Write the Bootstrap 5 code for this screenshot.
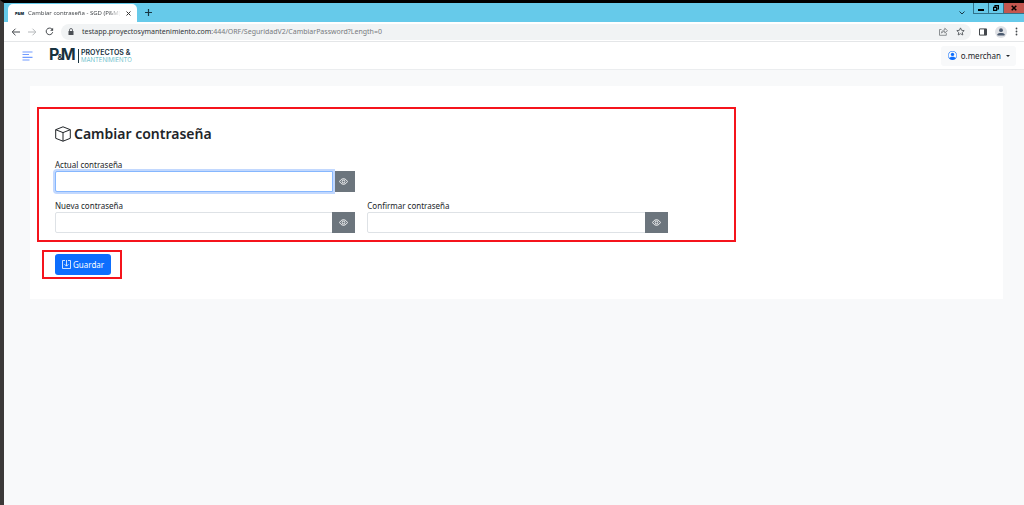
<!DOCTYPE html>
<html lang="es">
<head>
<meta charset="utf-8">
<meta name="viewport" content="width=device-width, initial-scale=1">
<title>Cambiar contraseña - SGD (P&amp;M)</title>
<link href="https://cdn.jsdelivr.net/npm/bootstrap@5.3.0/dist/css/bootstrap.min.css" rel="stylesheet">
<style>
  body { font-family: "Noto Sans", "Open Sans", sans-serif; font-size: 8px; line-height: 12px; background: #f8f9fa; color: #212529; border-top: 3px solid #000; border-left: 4px solid #3b3938; min-height: 100vh; }
  svg { display: block; flex: none; }
  .plain-btn { border: 0; background: none; padding: 0; color: #4b4f54; }
  /* browser frame */
  .tab-strip { background: #66caea; height: 19px; padding-left: 4px; }
  .tab-item { width: 129px; height: 18px; background: #fff; border-radius: 5px 5px 0 0; padding: 0 6px 0 7px; font-size: 6px; color: #45494d; }
  .tab-icon { font: 900 4px "Inter", sans-serif; color: #17323f; width: 9px; }
  .tab-title { white-space: nowrap; -webkit-mask-image: linear-gradient(90deg, #000 86%, transparent); mask-image: linear-gradient(90deg, #000 86%, transparent); }
  .win-btn { height: 11px; width: 15px; border: 1px solid #31728a; border-top: 0; border-right: 0; background: #66caea; padding: 0; }
  .win-close { width: 21px; background: #c4564f; }
  .tool-bar { height: 20px; padding: 0 2px 0 7px; border-bottom: 1px solid #e4e6e8; background: #fff; }
  .url-box { height: 16px; background: #f1f3f4; border-radius: 8px; padding: 0 6px 0 7px; margin-left: 7px; font-size: 7px; color: #777a7e; }
  .url-box b { font-weight: 400; color: #303337; }
  .avatar-btn { width: 12px; height: 12px; background: #dfe1e5; }
  /* application */
  .app-head { height: 28px; background: #fff; border-bottom: 1px solid #ebedef; padding: 0 8px 0 18px; }
  .brand { margin-left: 16px; color: #17323f; text-decoration: none; font-family: "Inter", sans-serif; }
  .brand-mark { font-size: 16px; font-weight: 700; line-height: 14px; width: 29px; }
  .brand-mark span { font-size: 8px; margin: 0 -2px; }
  .brand-name { border-left: 1px solid #17323f; padding-left: 2px; font-size: 7px; line-height: 7px; font-weight: 600; white-space: nowrap; }
  .brand-name span { font-size: 6px; font-weight: 300; color: #47b0bc; }
  .user-btn { height: 20px; background: #f8f9fa; border: 0; border-radius: 3px; padding: 0 6px 0 7px; font-size: 8px; color: #212529; }
  .user-btn::after { margin-left: 5px; }
  .page-card { margin: 16px 21px 0 26px; padding: 21px 8px 20px; background: #fff; }
  .frame-form { border: 2px solid #f5141c; width: 73%; margin-left: -1px; padding: 16px 66px 7px 16px; }
  .frame-save { border: 2px solid #f5141c; width: fit-content; margin: 8px 0 0 4px; padding: 2px 9px 2px 11px; }
  h1 { font-size: 14px; line-height: 18px; font-weight: 600; margin: 0 0 16px; gap: 3px; }
  .form-grid { --bs-gutter-x: 12px; --bs-gutter-y: 8px; }
  .form-label { margin: 0; display: block; }
  .form-control { min-height: 21px; height: 21px; font-size: 8px; line-height: 12px; padding: 3px 6px; border-radius: 2px; border-color: #dee2e6; }
  .form-control:focus { box-shadow: 0 0 0 2px #c2d8fe; border-color: #86b7fe; }
  .eye-btn { width: 23px; height: 21px; padding: 0; border-radius: 0; background: #6c757d; }
  .save-btn { height: 21px; padding: 0 7px; font-size: 8px; line-height: 12px; border: 0; border-radius: 3px; gap: 2px; background: #0d6efd; }
</style>
</head>
<body>
<div class="tab-strip d-flex align-items-end">
  <div class="tab-item d-flex align-items-center">
    <span class="tab-icon">P&amp;M</span>
    <span class="tab-title ms-1">Cambiar contraseña - SGD (P&amp;M)</span>
    <button class="plain-btn ms-auto" aria-label="Cerrar pestaña"><svg width="5" height="5" viewBox="0 0 5 5" stroke="#333" fill="none"><path d="M.5.5l4 4M4.500.5l-4 4"/></svg></button>
  </div>
  <button class="plain-btn ms-2 align-self-center" aria-label="Nueva pestaña"><svg width="7" height="7" viewBox="0 0 7 7" stroke="#173744" fill="none" stroke-width="1.200"><path d="M3.500 0v7M0 3.500h7"/></svg></button>
  <button class="plain-btn ms-auto me-2 align-self-center" aria-label="Buscar pestañas"><svg width="6" height="4" viewBox="0 0 6 4" stroke="#173744" fill="none"><path d="M.5.5L3 3 5.500.5"/></svg></button>
  <div class="d-flex align-self-start">
    <button class="win-btn" aria-label="Minimizar"><svg class="mx-auto" width="6" height="8" viewBox="0 0 6 8"><path d="M0 5h6v2H0z"/></svg></button>
    <button class="win-btn" aria-label="Restaurar"><svg class="mx-auto" width="6" height="6" viewBox="0 0 6 6" fill="none" stroke="#000" stroke-width="1.200"><path d="M.6 2.400h3v3h-3zM2 2V.6h3.400V4H4"/></svg></button>
    <button class="win-btn win-close" aria-label="Cerrar"><svg class="mx-auto" width="6" height="6" viewBox="0 0 6 6" stroke="#000" stroke-width="1.500"><path d="M.7.7l4.600 4.600M5.300.7L.7 5.300"/></svg></button>
  </div>
</div>
<div class="tool-bar d-flex align-items-center">
  <button class="plain-btn" aria-label="Atrás"><svg width="9" height="8" viewBox="0 0 9 8" stroke="#44484c" fill="none"><path d="M9 4H1.500M4.500.7L1.200 4l3.300 3.300"/></svg></button>
  <button class="plain-btn ms-2" aria-label="Adelante"><svg width="9" height="8" viewBox="0 0 9 8" stroke="#b4b7ba" fill="none"><path d="M0 4h7.500M4.500.7L7.800 4 4.500 7.300"/></svg></button>
  <button class="plain-btn ms-2" aria-label="Recargar"><svg width="9" height="9" viewBox="0 0 9 9" stroke="#44484c" fill="none"><path d="M7.700 5.200A3.300 3.300 0 1 1 6.900 2.100L8 3.200"/><path d="M8.100.7v3H5.100z" fill="#44484c" stroke="none"/></svg></button>
  <div class="url-box flex-grow-1 d-flex align-items-center">
    <svg width="6" height="8" viewBox="0 0 6 8"><path d="M.5 3h5v4h-5z" fill="#4b4f54"/><path d="M1.500 3.300V2a1.500 1.500 0 0 1 3 0v1.300" fill="none" stroke="#4b4f54" stroke-width=".8"/></svg>
    <span class="ms-1 ps-1 flex-grow-1"><b>testapp.proyectosymantenimiento.com</b>:444/ORF/SeguridadV2/CambiarPassword?Length=0</span>
    <button class="plain-btn" aria-label="Compartir"><svg width="9" height="9" viewBox="0 0 9 9" stroke="#73777b" stroke-width=".8" fill="none"><path d="M2.500 2.500H.5v5.800h6.800V6M2.500 6.200C2.600 4 4 3 5.800 3V1.200L8.500 3.700 5.800 6V4.400C4.300 4.400 3.300 5 2.500 6.200z"/></svg></button>
    <button class="plain-btn ms-2" aria-label="Marcador"><svg width="9" height="9" viewBox="0 0 9 9" stroke="#55595d" stroke-width=".9" fill="none"><path d="M4.500.9l1.100 2.400 2.600.3-1.900 1.800.5 2.600-2.300-1.300L2.200 8l.5-2.600L.8 3.600l2.600-.3z"/></svg></button>
  </div>
  <button class="plain-btn ms-2" aria-label="Panel lateral"><svg width="8" height="8" viewBox="0 0 8 8"><path d="M.5.900h7v6.200h-7z" fill="none" stroke="#44484c"/><path d="M5 1h3v6H5z" fill="#44484c"/></svg></button>
  <button class="plain-btn avatar-btn rounded-circle ms-2" aria-label="Perfil"><svg class="mx-auto" width="8" height="8" viewBox="0 0 8 8" fill="#4c5b70"><circle cx="4" cy="2.200" r="1.900"/><path d="M.5 7.500V6.300C.8 4.700 7.200 4.700 7.500 6.300v1.200z"/></svg></button>
  <button class="plain-btn ms-2 me-1" aria-label="Menú"><svg width="3" height="9" viewBox="0 0 3 9" fill="#44484c"><circle cx="1.500" cy="1.500" r=".9"/><circle cx="1.500" cy="4.500" r=".9"/><circle cx="1.500" cy="7.500" r=".9"/></svg></button>
</div>
<header class="app-head d-flex align-items-center">
  <button class="plain-btn" aria-label="Menú lateral"><svg width="11" height="10" viewBox="0 0 11 10" stroke="#729cff" stroke-width="1.200"><path d="M.5 1h10M.5 3.500h6.500M.5 6.300h10M.5 9h7"/></svg></button>
  <a class="brand d-flex align-items-center" href="#">
    <span class="brand-mark">P<span>&amp;</span>M</span>
    <span class="brand-name">PROYECTOS &amp;<br><span>MANTENIMIENTO</span></span>
  </a>
  <button class="user-btn dropdown-toggle d-flex align-items-center ms-auto" data-bs-toggle="dropdown">
    <svg width="9" height="9" viewBox="0 0 16 16" fill="#0d6efd"><path d="M11 6a3 3 0 1 1-6 0 3 3 0 0 1 6 0z"/><path fill-rule="evenodd" d="M0 8a8 8 0 1 1 16 0A8 8 0 0 1 0 8zm8-7a7 7 0 0 0-5.468 11.370C3.242 11.226 4.805 10 8 10s4.757 1.225 5.468 2.370A7 7 0 0 0 8 1z"/></svg><span class="ps-1">o.merchan</span>
  </button>
</header>
<main class="page-card">
  <form>
    <section class="frame-form">
      <h1 class="d-flex align-items-center"><svg width="16" height="16" viewBox="0 0 16 16" fill="none" stroke="#212529" stroke-linejoin="round"><path d="M8 .8l7.300 2.900v8.600L8 15.200.7 12.300V3.700zM.7 3.700L8 6.600l7.300-2.900M8 6.600v8.600"/></svg>Cambiar contraseña</h1>
      <div class="row form-grid">
        <div class="col-6">
          <label class="form-label" for="actual">Actual contraseña</label>
          <div class="input-group"><input class="form-control" type="password" id="actual" autofocus><button class="btn btn-secondary eye-btn" type="button" aria-label="Mostrar"><svg class="mx-auto" width="9" height="9" viewBox="0 0 16 16" fill="none" stroke="#fff" stroke-width="1.600"><path d="M1 8s2.600-5 7-5 7 5 7 5-2.600 5-7 5-7-5-7-5z"/><circle cx="8" cy="8" r="2.500"/></svg></button></div>
        </div>
        <div class="w-100 m-0"></div>
        <div class="col-6">
          <label class="form-label" for="nueva">Nueva contraseña</label>
          <div class="input-group"><input class="form-control" type="password" id="nueva"><button class="btn btn-secondary eye-btn" type="button" aria-label="Mostrar"><svg class="mx-auto" width="9" height="9" viewBox="0 0 16 16" fill="none" stroke="#fff" stroke-width="1.600"><path d="M1 8s2.600-5 7-5 7 5 7 5-2.600 5-7 5-7-5-7-5z"/><circle cx="8" cy="8" r="2.500"/></svg></button></div>
        </div>
        <div class="col-6">
          <label class="form-label" for="confirmar">Confirmar contraseña</label>
          <div class="input-group"><input class="form-control" type="password" id="confirmar"><button class="btn btn-secondary eye-btn" type="button" aria-label="Mostrar"><svg class="mx-auto" width="9" height="9" viewBox="0 0 16 16" fill="none" stroke="#fff" stroke-width="1.600"><path d="M1 8s2.600-5 7-5 7 5 7 5-2.600 5-7 5-7-5-7-5z"/><circle cx="8" cy="8" r="2.500"/></svg></button></div>
        </div>
      </div>
    </section>
    <div class="frame-save">
      <button class="btn btn-primary save-btn d-flex align-items-center" type="submit"><svg width="9" height="9" viewBox="0 0 9 9" fill="none" stroke="#fff" stroke-width=".8"><path d="M3 .5H.5v8h8v-8H6M4.500 0v6M2.500 4.200l2 2 2-2"/></svg>Guardar</button>
    </div>
  </form>
</main>
<script src="https://cdn.jsdelivr.net/npm/bootstrap@5.3.0/dist/js/bootstrap.bundle.min.js"></script>
<script>document.getElementById('actual').focus();</script>
</body>
</html>
